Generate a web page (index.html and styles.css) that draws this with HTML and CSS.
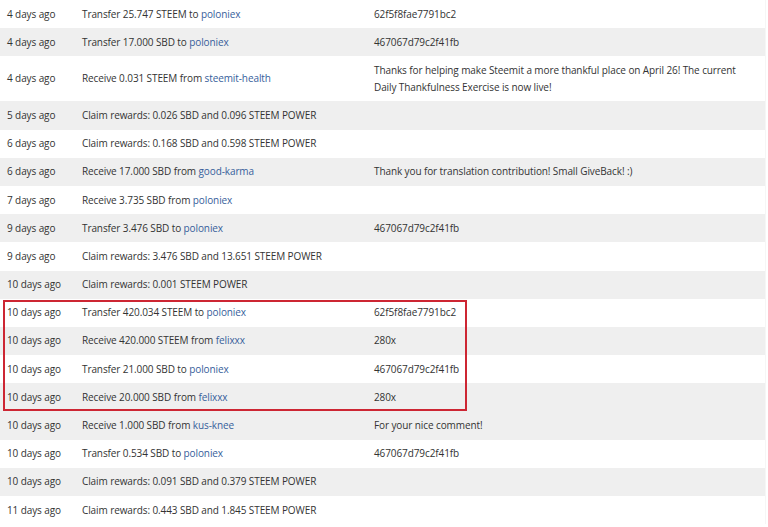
FILE: index.html
```html
<!DOCTYPE html>
<html>
<head>
<meta charset="utf-8">
<link rel="stylesheet" href="styles.css">
</head>
<body>
<div class="wallet">
  <div class="row"><div class="date">4 days ago</div><div class="op">Transfer 25.747 STEEM to <a href="#">poloniex</a></div><div class="memo">62f5f8fae7791bc2</div></div>
  <div class="row"><div class="date">4 days ago</div><div class="op">Transfer 17.000 SBD to <a href="#">poloniex</a></div><div class="memo">467067d79c2f41fb</div></div>
  <div class="row tall"><div class="date">4 days ago</div><div class="op">Receive 0.031 STEEM from <a href="#">steemit-health</a></div><div class="memo">Thanks for helping make Steemit a more thankful place on April 26! The current Daily Thankfulness Exercise is now live!</div></div>
  <div class="row"><div class="date">5 days ago</div><div class="op">Claim rewards: 0.026 SBD and 0.096 STEEM POWER</div><div class="memo"></div></div>
  <div class="row"><div class="date">6 days ago</div><div class="op">Claim rewards: 0.168 SBD and 0.598 STEEM POWER</div><div class="memo"></div></div>
  <div class="row"><div class="date">6 days ago</div><div class="op">Receive 17.000 SBD from <a href="#">good-karma</a></div><div class="memo">Thank you for translation contribution! Small GiveBack! :)</div></div>
  <div class="row"><div class="date">7 days ago</div><div class="op">Receive 3.735 SBD from <a href="#">poloniex</a></div><div class="memo"></div></div>
  <div class="row"><div class="date">9 days ago</div><div class="op">Transfer 3.476 SBD to <a href="#">poloniex</a></div><div class="memo">467067d79c2f41fb</div></div>
  <div class="row"><div class="date">9 days ago</div><div class="op">Claim rewards: 3.476 SBD and 13.651 STEEM POWER</div><div class="memo"></div></div>
  <div class="row"><div class="date">10 days ago</div><div class="op">Claim rewards: 0.001 STEEM POWER</div><div class="memo"></div></div>
  <div class="group">
    <div class="row"><div class="date">10 days ago</div><div class="op">Transfer 420.034 STEEM to <a href="#">poloniex</a></div><div class="memo">62f5f8fae7791bc2</div></div>
    <div class="row"><div class="date">10 days ago</div><div class="op">Receive 420.000 STEEM from <a href="#">felixxx</a></div><div class="memo">280x</div></div>
    <div class="row"><div class="date">10 days ago</div><div class="op">Transfer 21.000 SBD to <a href="#">poloniex</a></div><div class="memo">467067d79c2f41fb</div></div>
    <div class="row"><div class="date">10 days ago</div><div class="op">Receive 20.000 SBD from <a href="#">felixxx</a></div><div class="memo">280x</div></div>
    <div class="highlight"></div>
  </div>
  <div class="row"><div class="date">10 days ago</div><div class="op">Receive 1.000 SBD from <a href="#">kus-knee</a></div><div class="memo">For your nice comment!</div></div>
  <div class="row"><div class="date">10 days ago</div><div class="op">Transfer 0.534 SBD to <a href="#">poloniex</a></div><div class="memo">467067d79c2f41fb</div></div>
  <div class="row"><div class="date">10 days ago</div><div class="op">Claim rewards: 0.091 SBD and 0.379 STEEM POWER</div><div class="memo"></div></div>
  <div class="row"><div class="date">11 days ago</div><div class="op">Claim rewards: 0.443 SBD and 1.845 STEEM POWER</div><div class="memo"></div></div>
</div>
</body>
</html>
```
FILE: styles.css
```css
html, body {
  margin: 0;
  padding: 0;
  background: #fff;
}
body {
  font-family: "Open Sans", "Noto Sans", sans-serif;
  font-size: 10px;
  letter-spacing: -0.1px;
  color: #333;
  overflow: hidden;
}
.wallet {
  width: 765px;
  border-right: 1px solid #f6f6f6;
}
.group {
  position: relative;
}
.row {
  display: grid;
  grid-template-columns: 82px 292px 1fr;
  height: 28.2px;
  align-items: center;
  line-height: 17px;
}
.wallet > .row:nth-child(even) {
  background: #efefef;
}
.group > .row:nth-child(odd) {
  background: #fff;
}
.group > .row:nth-child(even) {
  background: #efefef;
}
.row.tall {
  height: 45px;
}
.date {
  padding-left: 7px;
}
.memo {
  padding-right: 20px;
}
a {
  color: #37609b;
  text-decoration: none;
}
.highlight {
  position: absolute;
  left: 3px;
  top: 1.6px;
  width: 460px;
  height: 107px;
  border: 2px solid #cd2633;
}
```
